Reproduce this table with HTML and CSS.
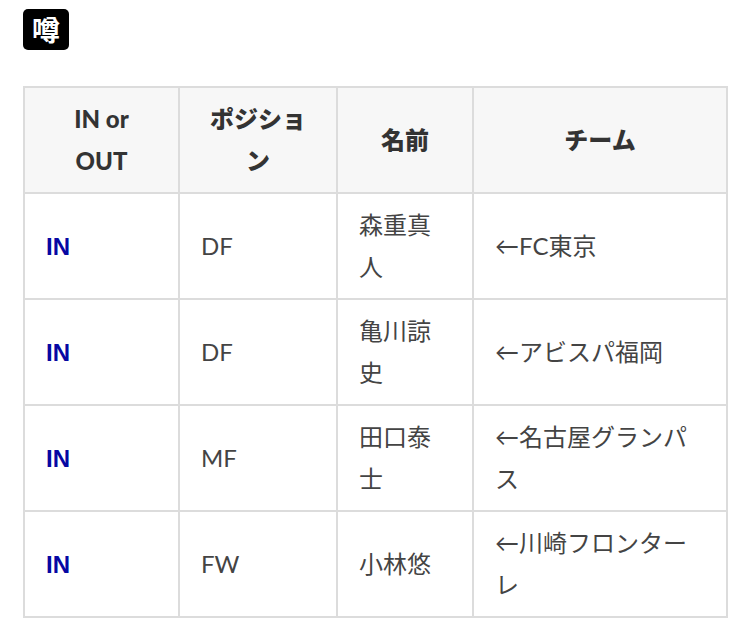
FILE: index.html
```html
<!DOCTYPE html>
<html lang="ja">
<head>
<meta charset="utf-8">
<link rel="stylesheet" href="styles.css">
</head>
<body>
<div class="page">
  <h3 class="badge">噂</h3>
  <table class="tbl">
    <colgroup>
      <col class="c1"><col class="c2"><col class="c3"><col class="c4">
    </colgroup>
    <thead>
      <tr><th>IN or OUT</th><th>ポジション</th><th>名前</th><th>チーム</th></tr>
    </thead>
    <tbody>
      <tr><td><span class="in">IN</span></td><td>DF</td><td>森重真人</td><td>←FC東京</td></tr>
      <tr><td><span class="in">IN</span></td><td>DF</td><td>亀川諒史</td><td>←アビスパ福岡</td></tr>
      <tr><td><span class="in">IN</span></td><td>MF</td><td>田口泰士</td><td>←名古屋グランパス</td></tr>
      <tr><td><span class="in">IN</span></td><td>FW</td><td>小林悠</td><td>←川崎フロンターレ</td></tr>
    </tbody>
  </table>
</div>
</body>
</html>
```
FILE: styles.css
```css
html, body {
  margin: 0;
  padding: 0;
  background: #fff;
}
.page {
  padding: 9px 0 0 23px;
  font-family: Lato, "Noto Sans CJK JP", sans-serif;
}
.badge {
  display: inline-block;
  margin: 0;
  width: 46px;
  height: 41px;
  line-height: 41px;
  text-align: center;
  background: #000;
  color: #fff;
  border-radius: 5px;
  font-family: "Noto Sans CJK JP", sans-serif;
  font-size: 28px;
  font-weight: 700;
}
.tbl {
  margin-top: 36px;
  border-collapse: collapse;
  table-layout: fixed;
  width: 703px;
  font-size: 24px;
  line-height: 42px;
  color: #444;
}
.c1 { width: 155px; }
.c2 { width: 158px; }
.c3 { width: 136px; }
.c4 { width: 254px; }
.tbl th, .tbl td {
  border: 2px solid #dcdcdc;
  padding: 10px 21px;
  vertical-align: middle;
}
.tbl th {
  background: #f7f7f7;
  color: #333;
  font-weight: 900;
  text-align: center;
  font-size: 24px;
  padding: 10px 22px;
}
.tbl td {
  text-align: left;
  font-weight: 400;
}
.in {
  color: #0707a3;
  font-weight: 700;
  font-family: "Liberation Sans", Arial, sans-serif;
  font-size: 24px;
}
```
